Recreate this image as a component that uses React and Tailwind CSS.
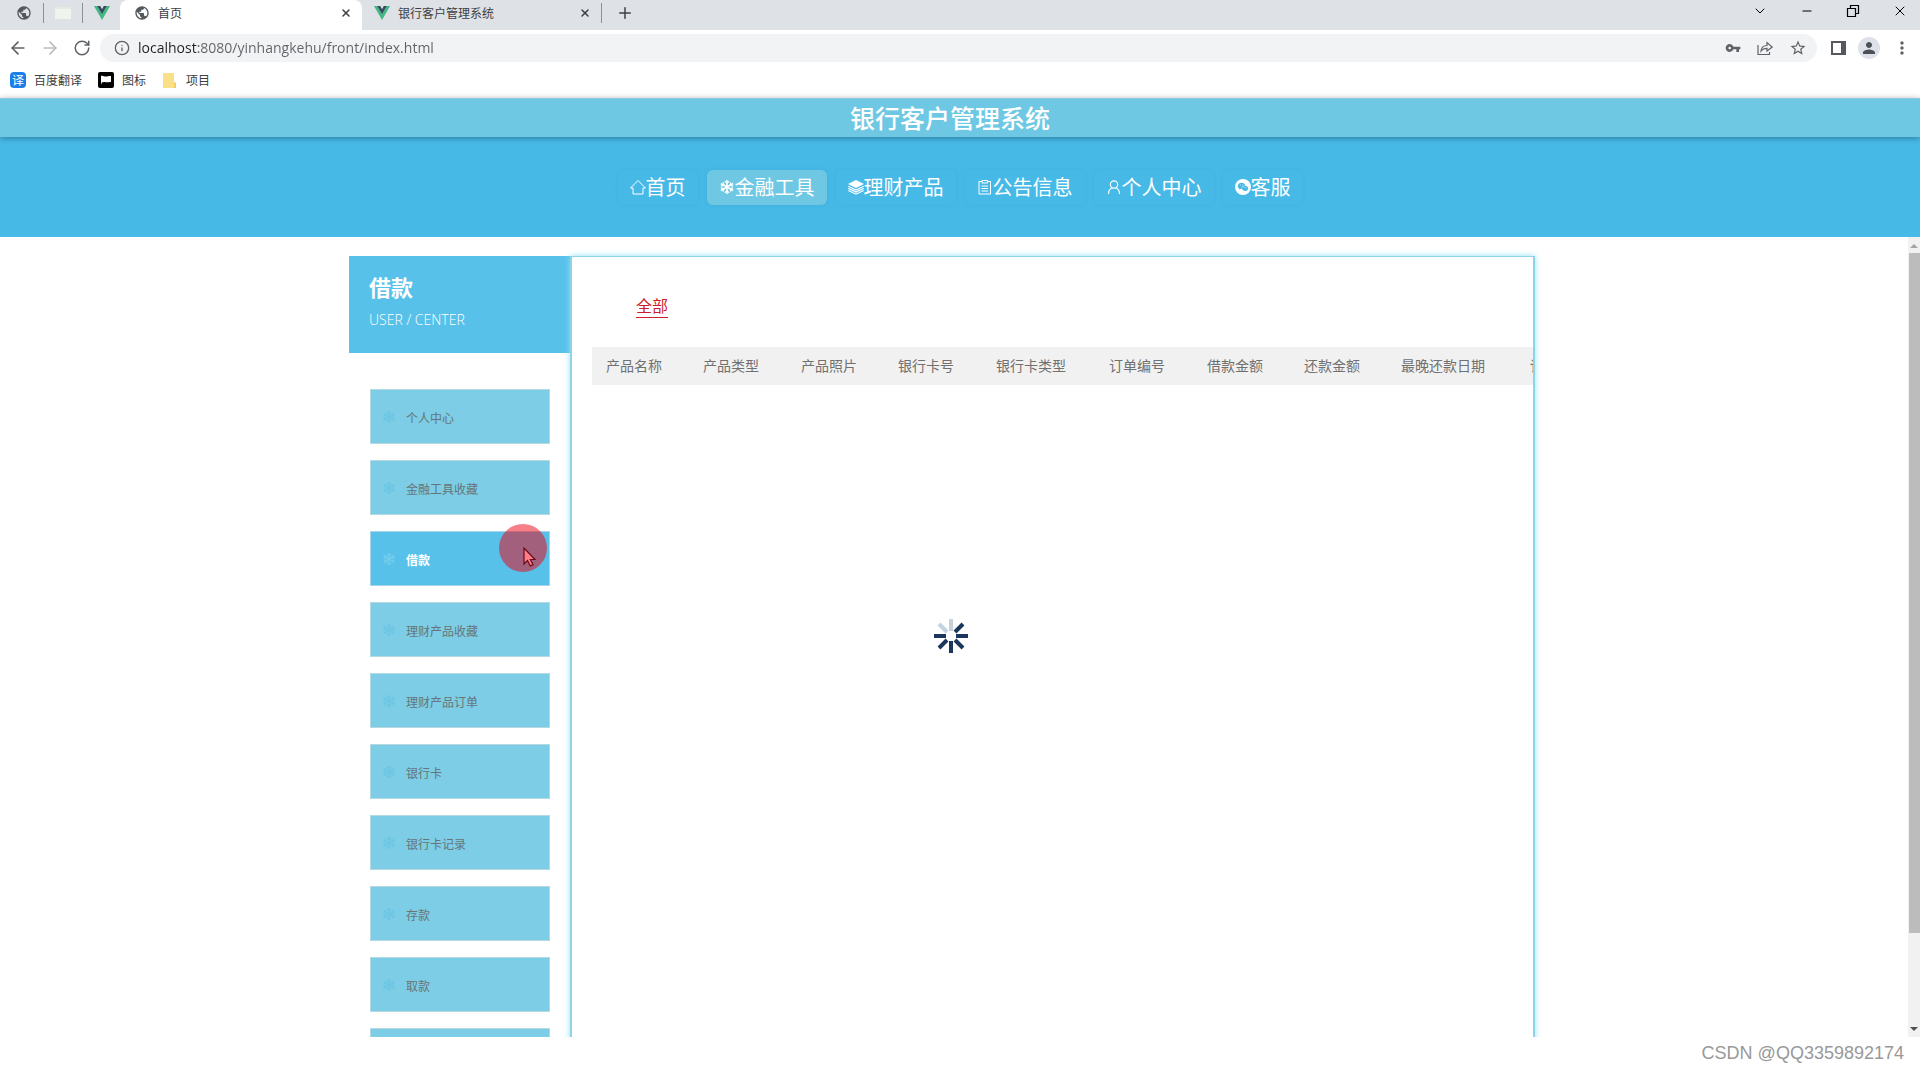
import React from 'react';
import { ArrowLeft, ArrowRight, RotateCw, Info, ChevronDown, Minus, X, Plus } from 'lucide-react';
import { MdVpnKey, MdPerson, MdMoreVert, MdStarBorder, MdPublic } from 'react-icons/md';
import { AiFillWechat } from 'react-icons/ai';

const VueLogo = () => (
  <svg viewBox="0 0 16 14" className="w-4 h-[14px]">
    <path d="M0 0h3.2L8 8.3 12.8 0H16L8 14z" fill="#41b883" />
    <path d="M3.2 0H6.2L8 3.2 9.8 0h3L8 8.3z" fill="#35495e" />
  </svg>
);

const HomeIcon = () => (
  <svg viewBox="0 0 16 16" className="w-4 h-4" fill="none" stroke="currentColor" strokeWidth="1">
    <path d="M.5 9 8 1.500 15.500 9H13v6H3V9z" />
  </svg>
);

const SnowIcon = ({ className = 'w-4 h-4' }) => (
  <svg viewBox="0 0 16 16" className={className} fill="none" stroke="currentColor" strokeWidth="1.5">
    <path d="M8 1v14M1.900 4.500l12.200 7M1.900 11.500l12.200-7" />
    <path d="M5.800 2.200 8 4.400l2.200-2.200M5.800 13.800 8 11.600l2.200 2.200M1.900 7.200l3-.8-.8-3M14.100 8.800l-3 .8.8 3M1.900 8.800l3 .8-.8 3M14.100 7.200l-3-.8.8-3" strokeWidth="1.200" />
  </svg>
);

const LayersIcon = () => (
  <svg viewBox="0 0 16 16" className="w-4 h-4" fill="none" stroke="currentColor" strokeWidth="1.2">
    <path d="M8 1 16 5 8 9 0 5z" fill="currentColor" stroke="none" />
    <path d="M.3 7.300 8 11l7.700-3.700M.3 9.400 8 13.100l7.700-3.700M.3 11.500 8 15.200l7.700-3.700" />
  </svg>
);

const NoticeIcon = () => (
  <svg viewBox="0 0 16 16" className="w-4 h-4" fill="none" stroke="currentColor" strokeWidth="1">
    <path d="M5 2.500H2v12.500h11.500V2.500H11M5 1.500h5.500v2.500H5zM4.500 7H11M4.500 9.500H11M4.500 12H11" />
  </svg>
);

const UserIcon = () => (
  <svg viewBox="0 0 16 16" className="w-4 h-4" fill="none" stroke="currentColor" strokeWidth="1.2">
    <circle cx="8" cy="5.5" r="3.700" />
    <path d="M2.500 15c0-3.500 1.800-5.500 4-6.200M13.500 15c0-3.500-1.800-5.500-4-6.200" />
  </svg>
);

const ChatIcon = () => (
  <span className="w-4 h-4 rounded-full bg-white text-[#46b9e7] flex items-center justify-center">
    <AiFillWechat className="w-3 h-3" />
  </span>
);

const navItems = [
  { label: '首页', icon: HomeIcon },
  { label: '金融工具', icon: SnowIcon, active: true },
  { label: '理财产品', icon: LayersIcon },
  { label: '公告信息', icon: NoticeIcon },
  { label: '个人中心', icon: UserIcon },
  { label: '客服', icon: ChatIcon },
];

const menuItems = ['个人中心', '金融工具收藏', '借款', '理财产品收藏', '理财产品订单', '银行卡', '银行卡记录', '存款', '取款', '转账'];

const columns = [
  { label: '产品名称', width: 'w-[97px]' },
  { label: '产品类型', width: 'w-[98px]' },
  { label: '产品照片', width: 'w-[97px]' },
  { label: '银行卡号', width: 'w-[98px]' },
  { label: '银行卡类型', width: 'w-[113px]' },
  { label: '订单编号', width: 'w-[98px]' },
  { label: '借款金额', width: 'w-[97px]' },
  { label: '还款金额', width: 'w-[97px]' },
  { label: '最晚还款日期', width: 'w-[129px]' },
  { label: '详情', width: 'w-[98px]' },
];

const TabStrip = () => (
  <div className="flex items-center h-[30px] bg-[#dee1e6] text-xs text-[#3c4043]">
    <div className="flex items-center justify-between w-[120px] h-full pl-4 pr-[10px] pb-1">
      <button aria-label="标签页"><MdPublic className="w-4 h-4 text-[#55585c]" /></button>
      <span className="w-px h-5 bg-[#8d9094]" />
      <button aria-label="表格" className="w-4 h-3 bg-[#f0f4ee] border-t-2 border-[#e6eadf]" />
      <span className="w-px h-5 bg-[#8d9094]" />
      <button aria-label="Vue"><VueLogo /></button>
    </div>
    <div className="flex items-center w-[242px] h-full bg-white rounded-t-lg pl-[14px] pr-[10px] pb-1">
      <MdPublic className="w-4 h-4 text-[#55585c]" />
      <button className="flex-1 text-left pl-2">首页</button>
      <button aria-label="关闭"><X className="w-3 h-3" strokeWidth={3} /></button>
    </div>
    <div className="flex items-center w-[239px] h-full pl-3 pr-[10px] pb-1">
      <VueLogo />
      <button className="flex-1 text-left pl-2">银行客户管理系统</button>
      <button aria-label="关闭"><X className="w-3 h-3" strokeWidth={3} /></button>
    </div>
    <div className="flex items-center gap-[14px] pb-1">
      <span className="w-px h-5 bg-[#8d9094]" />
      <button aria-label="新标签页"><Plus className="w-[18px] h-[18px]" /></button>
    </div>
    <div className="flex items-center gap-8 ml-auto pr-3 pb-2 text-black">
      <button aria-label="搜索标签页"><ChevronDown className="w-4 h-4" strokeWidth={1.5} /></button>
      <button aria-label="最小化"><Minus className="w-[14px] h-[14px]" strokeWidth={2} /></button>
      <button aria-label="还原">
        <svg viewBox="0 0 14 14" className="w-[14px] h-[14px]" fill="none" stroke="currentColor" strokeWidth="1.2">
          <path d="M1.500 4.500h8v8h-8zM4.500 4.500v-3h8v8h-3" />
        </svg>
      </button>
      <button aria-label="关闭窗口"><X className="w-4 h-4" strokeWidth={1.5} /></button>
    </div>
  </div>
);

const Toolbar = () => (
  <div className="flex items-center h-9 pl-2 pr-2 text-[#5f6368]">
    <div className="flex items-center gap-3 pr-2">
      <button aria-label="后退"><ArrowLeft className="w-5 h-5" /></button>
      <button aria-label="前进" className="text-[#babcbe]"><ArrowRight className="w-5 h-5" /></button>
      <button aria-label="刷新"><RotateCw className="w-5 h-[18px]" /></button>
    </div>
    <div className="flex items-center flex-1 h-7 bg-[#f1f3f4] rounded-full pl-[14px] pr-[10px]">
      <Info className="w-4 h-4" />
      <input
        aria-label="地址"
        defaultValue="localhost:8080/yinhangkehu/front/index.html"
        className="flex-1 ml-2 outline-none font-['Open_Sans','Noto_Sans_CJK_SC',sans-serif] text-sm text-transparent bg-clip-text bg-[linear-gradient(90deg,#202124_60px,#5f6368_60px)]"
      />
      <div className="flex items-center gap-4">
        <button aria-label="密码"><MdVpnKey className="w-4 h-4" /></button>
        <button aria-label="分享">
          <svg viewBox="0 0 16 16" className="w-4 h-4" fill="none" stroke="currentColor" strokeWidth="1.2">
            <path d="M1 5v9.500h11.500V12M4 11c.5-4 3-5.500 6-5.500V2.500L15.200 7 10 11V8.300c-2.500 0-4.500.7-6 2.700z" />
          </svg>
        </button>
        <button aria-label="收藏"><MdStarBorder className="w-[18px] h-[18px]" /></button>
      </div>
    </div>
    <div className="flex items-center gap-3 pl-[14px]">
      <button aria-label="侧边栏" className="w-[15px] h-[14px] border-2 border-r-[5px] border-[#55585c]" />
      <button aria-label="个人资料" className="w-[22px] h-[22px] rounded-full bg-[#dfe1ea] flex items-center justify-center">
        <MdPerson className="w-[18px] h-[18px] text-[#4d5156]" />
      </button>
      <button aria-label="菜单"><MdMoreVert className="w-5 h-5" /></button>
    </div>
  </div>
);

const Bookmarks = () => (
  <div className="flex items-center gap-4 h-8 pl-[10px] pb-1 text-xs text-[#3c4043]">
    <a href="#fanyi" className="flex items-center gap-2">
      <span className="w-4 h-4 rounded-sm bg-[#1a7fe8] text-white text-xs leading-4 text-center">译</span>
      百度翻译
    </a>
    <a href="#icons" className="flex items-center gap-2">
      <svg viewBox="0 0 16 16" className="w-4 h-4">
        <rect width="16" height="16" rx="2" fill="#000" />
        <path d="M3 13V4c2-1 3.500 1 5.500.5S12 4 13 4v6c-2-.5-3 .8-5 .2S4.500 10 3.800 10.500" fill="#fff" />
      </svg>
      图标
    </a>
    <a href="#project" className="flex items-center gap-[10px] pl-px">
      <svg viewBox="0 0 13 15" className="w-[13px] h-[15px]">
        <path d="M0 0h11v9l2 1v5H0z" fill="#fbe08a" />
        <path d="M11 9l2 1v5h-2z" fill="#f3cf63" />
      </svg>
      项目
    </a>
  </div>
);

const Spinner = () => (
  <svg viewBox="-17 -17 34 34" className="w-[34px] h-[34px]" strokeWidth="4" stroke="#1b365d">
    <path d="M5 0H17M-5 0H-17M0 5V17M4 4l8 8M-4 4l-8 8M4-4l8-8" />
    <path d="M0-5V-17" stroke="#c9d0d6" />
    <path d="M-4-4l-8-8" stroke="#c2d3e2" />
  </svg>
);

const Sidebar = () => (
  <aside className="w-[221px] shrink-0">
    <div className="h-[97px] bg-[#57c1ea] px-5 pt-[14px] text-white">
      <h2 className="text-[22px] leading-8 font-bold">借款</h2>
      <p className="text-sm leading-9 font-['Open_Sans',sans-serif] font-light">USER / CENTER</p>
    </div>
    <ul className="flex flex-col gap-4 pl-[21px] pr-5 pt-9">
      {menuItems.map((item) => (
        <li key={item}>
          <a
            href="#menu"
            className={
              item === '借款'
                ? 'flex items-center h-[55px] px-[11px] gap-[10px] border border-[#a9d5e6] bg-[#57c1ea] text-xs font-bold text-white'
                : 'flex items-center h-[55px] px-[11px] gap-[10px] border border-[#b4d9e2] bg-[#7ccde5] text-xs text-[#66757a]'
            }
          >
            <SnowIcon className={item === '借款' ? 'w-[14px] h-[14px] text-[#74cdea]' : 'w-[14px] h-[14px] text-[#6cc6e4]'} />
            <span className="pt-[2px]">{item}</span>
          </a>
        </li>
      ))}
    </ul>
  </aside>
);

const ScrollBar = () => (
  <div className="flex flex-col items-center w-3 shrink-0 bg-[#f1f1f1]">
    <svg viewBox="0 0 12 16" className="w-3 h-4"><path d="M2 11l4-4 4 4z" fill="#a3a3a3" /></svg>
    <div className="w-full grow-[680] pl-px"><div className="h-full bg-[#bcbcbc]" /></div>
    <div className="grow-[88]" />
    <svg viewBox="0 0 12 16" className="w-3 h-4"><path d="M2 6l4 4 4-4z" fill="#505050" /></svg>
  </div>
);

function App() {
  return (
    <div className="h-screen flex flex-col bg-white overflow-hidden font-['Noto_Sans_CJK_SC',sans-serif]">
      <TabStrip />
      <Toolbar />
      <Bookmarks />

      {/* Page header */}
      <header className="shrink-0">
        <h1 className="relative h-[39px] pr-5 bg-[#6fc8e3] border-t border-[#8cc9dc] text-center text-[25px] leading-9 font-medium text-white shadow-[0_1px_6px_rgba(0,0,0,0.35)]">
          银行客户管理系统
        </h1>
        <nav className="flex items-center justify-center gap-[9px] h-[100px] bg-[#46b9e7] text-white text-xl">
          {navItems.map(({ label, icon: Icon, active }) => (
            <a
              key={label}
              href="#nav"
              className={
                active
                  ? 'flex items-center h-[35px] px-3 rounded-md bg-[#6fc8e3] shadow-[0_0_6px_rgba(0,0,0,0.05)]'
                  : 'flex items-center h-[35px] px-3 rounded-md shadow-[0_0_6px_rgba(0,0,0,0.03)]'
              }
            >
              <Icon />
              {label}
            </a>
          ))}
        </nav>
      </header>

      {/* Scrolling content */}
      <div className="flex flex-1 min-h-0">
        <div className="flex flex-1 min-w-0 justify-center pt-[19px] pr-6 overflow-hidden">
          <div className="flex w-full max-w-[1186px] min-h-[1000px]">
            <Sidebar />
            <main className="flex-1 min-w-0 overflow-hidden border-2 border-t border-[#8fd3e8] shadow-[0_0_6px_#8fe0f5] pl-5">
              <div className="pt-9 pl-11 pb-[29px]">
                <button className="text-base leading-6 text-[#cc1f2c] border-b border-[#cc1f2c]">全部</button>
              </div>
              <table className="table-fixed w-[1022px] text-sm text-[#707070]">
                <thead>
                  <tr className="h-[38px] bg-[#f2f1f1]">
                    {columns.map((col) => (
                      <th key={col.label} className={`${col.width} pl-[14px] pb-[2px] text-left font-normal whitespace-nowrap`}>{col.label}</th>
                    ))}
                  </tr>
                </thead>
              </table>
            </main>
          </div>
        </div>
        <ScrollBar />
      </div>

      <footer className="flex items-center justify-end h-[35px] shrink-0 pr-4 pb-1 text-lg text-[#999] font-['Liberation_Sans',sans-serif]">
        CSDN @QQ3359892174
      </footer>

      {/* Loading spinner and mouse pointer float over the page */}
      <div className="absolute left-[934px] top-[619px]"><Spinner /></div>
      <div className="absolute left-[499px] top-[524px] w-12 h-12 rounded-full bg-[#f00010]/50" />
      <svg viewBox="0 0 14 22" className="absolute left-[523px] top-[547px] w-[14px] h-[22px]">
        <path d="M1 1v16l3.500-3.500L7.300 19l2.700-1.300-2.600-5.200H12z" fill="#ff7d88" stroke="#6b0a1a" strokeWidth="1.2" />
      </svg>
    </div>
  );
}

export default App;
